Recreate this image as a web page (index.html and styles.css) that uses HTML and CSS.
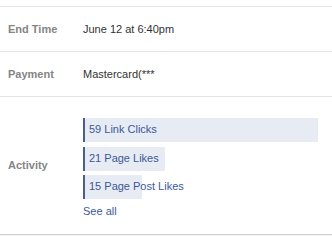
FILE: index.html
```html
<!doctype html>
<html lang="en">
<head>
<meta charset="UTF-8" />
<title>Ad details</title>
<link rel="stylesheet" href="styles.css">
</head>
<body>

<table class="details">
	<tr class="row-short">
		<th>End Time</th>
		<td>June 12 at 6:40pm</td>
	</tr>
	<tr class="row-short">
		<th>Payment</th>
		<td>Mastercard(***</td>
	</tr>
	<tr class="row-activity">
		<th>Activity</th>
		<td>
			<ul class="activity">
				<li><span class="bar" style="width:229px">59 Link Clicks</span></li>
				<li><span class="bar" style="width:76px">21 Page Likes</span></li>
				<li><span class="bar" style="width:53px">15 Page Post Likes</span></li>
			</ul>
			<a class="see-all" href="#">See all</a>
		</td>
	</tr>
</table>
<div class="foot"></div>

</body>
</html>
```

FILE: styles.css
```css
html,body,ul{margin:0;padding:0;}
li{list-style:none;}
a{text-decoration:none;}

body{
	background: #fff;
	font-family: "Liberation Sans", sans-serif;
	font-size: 11px;
	color: #333;
	padding-top: 6px;
}

.details{
	width: 100%;
	border-collapse: collapse;
}

.details tr{
	border-top: 1px solid #e5e5e5;
}

.details tr.row-activity{
	border-bottom: 1px solid #d0d0d0;
}

.details th{
	width: 75px;
	padding: 0 0 0 8px;
	text-align: left;
	vertical-align: middle;
	color: #858585;
	font-weight: bold;
}

.details td{
	padding: 0;
	vertical-align: middle;
}

.row-short{
	height: 45px;
}

.row-activity td{
	padding: 21px 0 16px 0;
}

.activity li{
	height: 24px;
	margin-bottom: 4.5px;
}

.activity .bar{
	display: block;
	height: 24px;
	line-height: 23px;
	padding-left: 4px;
	border-left: 2px solid #4b5e94;
	background-color: #e7ebf3;
	color: #3b5998;
	white-space: nowrap;
}

.see-all{
	display: block;
	color: #3b5998;
	line-height: 14px;
}

.foot{
	height: 3px;
	background: #f2f2f2;
}
```
